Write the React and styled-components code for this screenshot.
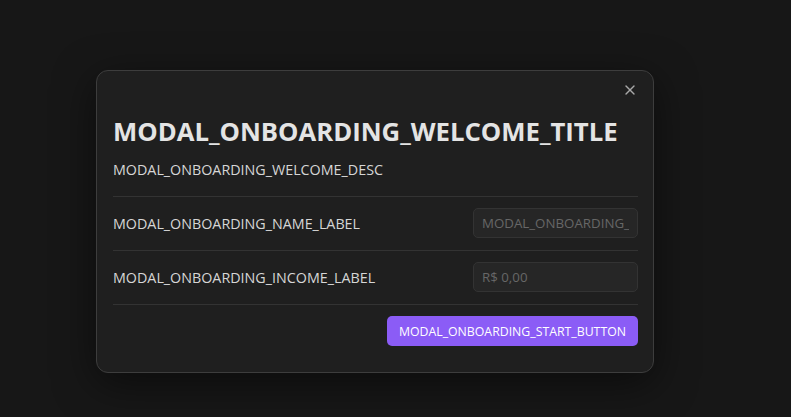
import React from "react";
import styled, { createGlobalStyle } from "styled-components";
import { X } from "lucide-react";

const GlobalStyle = createGlobalStyle`
  html, body {
    margin: 0;
    padding: 0;
    background: #171717;
    font-family: "Open Sans", "Noto Sans", sans-serif;
  }
`;

const Page = styled.div`
  width: 791px;
  height: 417px;
  box-sizing: border-box;
  padding: 70px 0 0 96px;
`;

const Modal = styled.div`
  width: 558px;
  box-sizing: border-box;
  background: #1f1f1f;
  border: 1px solid #3d3d3d;
  border-radius: 12px;
  box-shadow: 0 10px 40px rgba(0, 0, 0, 0.5);
  padding: 10px 15px 26px 16px;
  display: flex;
  flex-direction: column;
`;

const Header = styled.div`
  display: flex;
  justify-content: flex-end;
`;

const CloseButton = styled.button`
  background: none;
  border: none;
  padding: 1px 2px 3px 2px;
  margin-right: -2px;
  color: #a8a8a8;
  display: flex;
  cursor: pointer;
`;

const Title = styled.h2`
  margin: 14px 0 0 0;
  font-size: 25.7px;
  line-height: 34px;
  font-weight: 700;
  color: #e4e4e4;
`;

const Desc = styled.p`
  margin: 11px 0 16px 0;
  font-size: 14.3px;
  line-height: 20px;
  color: #d6d6d6;
`;

const Row = styled.div`
  display: flex;
  align-items: center;
  justify-content: space-between;
  border-top: 1px solid #333333;
  padding: ${(p) => (p.$end ? "11px 0 0 0" : "11px 0 12px 0")};
  ${(p) => p.$end && "justify-content: flex-end;"}
`;

const Label = styled.label`
  font-size: 14.3px;
  color: #d6d6d6;
`;

const Input = styled.input`
  width: 165px;
  height: 30px;
  box-sizing: border-box;
  background: #262626;
  border: 1px solid #333333;
  border-radius: 5px;
  padding: 0 8px;
  font-family: inherit;
  font-size: 13.3px;
  color: #d6d6d6;
  outline: none;
  &::placeholder {
    color: #676767;
  }
`;

const StartButton = styled.button`
  height: 30px;
  padding: 0 12px;
  background: #8b5cf6;
  border: none;
  border-radius: 5px;
  color: #ffffff;
  font-family: inherit;
  font-size: 12.3px;
  cursor: pointer;
`;

export default function App() {
  return (
    <>
      <GlobalStyle />
      <Page>
        <Modal>
          <Header>
            <CloseButton aria-label="close">
              <X size={16} strokeWidth={2} />
            </CloseButton>
          </Header>
          <Title>MODAL_ONBOARDING_WELCOME_TITLE</Title>
          <Desc>MODAL_ONBOARDING_WELCOME_DESC</Desc>
          <Row>
            <Label>MODAL_ONBOARDING_NAME_LABEL</Label>
            <Input placeholder="MODAL_ONBOARDING_NAME_PLACEHOLDER" />
          </Row>
          <Row>
            <Label>MODAL_ONBOARDING_INCOME_LABEL</Label>
            <Input placeholder="R$ 0,00" />
          </Row>
          <Row $end>
            <StartButton>MODAL_ONBOARDING_START_BUTTON</StartButton>
          </Row>
        </Modal>
      </Page>
    </>
  );
}
